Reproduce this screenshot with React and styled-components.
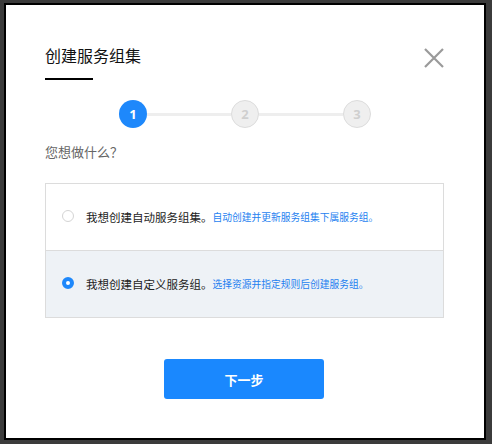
import React, { useState } from 'react'
import styled, { createGlobalStyle } from 'styled-components'

const GlobalStyle = createGlobalStyle`
    html, body {
        margin: 0;
        padding: 0;
        background: #3b3b3b;
    }
    body {
        font-family: "Noto Sans CJK SC", "Noto Sans", sans-serif;
    }
`

const steps = [1, 2, 3]

const options = [
    { id: 'auto', label: '我想创建自动服务组集。', hint: '自动创建并更新服务组集下属服务组。' },
    { id: 'custom', label: '我想创建自定义服务组。', hint: '选择资源并指定规则后创建服务组。' },
]

function App() {
    const [choice, setChoice] = useState('custom')

    return (
        <Page>
            <GlobalStyle />
            <Modal>
                <Header>
                    <TitleBlock>
                        <Title>创建服务组集</Title>
                        <TitleBar />
                    </TitleBlock>
                    <Close aria-label="close">
                        <svg width="20" height="20" viewBox="0 0 20 20">
                            <path d="M1 1 L19 19 M19 1 L1 19" stroke="#9a9a9a" strokeWidth="2.2" fill="none" />
                        </svg>
                    </Close>
                </Header>

                <Steps>
                    {steps.map((n, i) => (
                        <React.Fragment key={n}>
                            {i > 0 && <StepLine />}
                            <StepDot active={n === 1}>{n}</StepDot>
                        </React.Fragment>
                    ))}
                </Steps>

                <Question>您想做什么？</Question>

                <OptionList>
                    {options.map(o => (
                        <Option key={o.id} selected={choice === o.id} onClick={() => setChoice(o.id)}>
                            <Radio selected={choice === o.id} />
                            <Label>{o.label}</Label>
                            <Hint>{o.hint}</Hint>
                        </Option>
                    ))}
                </OptionList>

                <Footer>
                    <NextButton>下一步</NextButton>
                </Footer>
            </Modal>
        </Page>
    )
}

export default App

const Page = styled.div`
    width: 492px;
    height: 444px;
    box-sizing: border-box;
    padding: 3px 0 0 4px;
`

const Modal = styled.div`
    width: 482px;
    height: 437px;
    box-sizing: border-box;
    background: #fff;
    border: 2px solid #000;
    padding: 38px 40px 0 39px;
    display: flex;
    flex-direction: column;
`

const Header = styled.div`
    display: flex;
    justify-content: space-between;
    align-items: flex-start;
`

const TitleBlock = styled.div`
    display: flex;
    flex-direction: column;
`

const Title = styled.div`
    font-size: 16px;
    line-height: 24px;
    color: #111;
    font-weight: 400;
`

const TitleBar = styled.div`
    width: 48px;
    height: 2px;
    background: #000;
    margin-top: 11px;
`

const Close = styled.div`
    width: 20px;
    height: 20px;
    margin-top: 5px;
    cursor: pointer;

    svg {
        display: block;
    }
`

const Steps = styled.div`
    display: flex;
    align-items: center;
    justify-content: center;
    margin-top: 20px;
    margin-left: 1px;
`

const StepDot = styled.div`
    width: 28px;
    height: 28px;
    border-radius: 50%;
    box-sizing: border-box;
    display: flex;
    align-items: center;
    justify-content: center;
    font-family: "Open Sans", "Liberation Sans", sans-serif;
    font-weight: 700;
    font-size: 13px;
    background: ${p => p.active ? '#1e88fb' : '#efefef'};
    color: ${p => p.active ? '#fff' : '#cfcfcf'};
    border: ${p => p.active ? 'none' : '1px solid #dcdcdc'};
`

const StepLine = styled.div`
    width: 84px;
    height: 3px;
    background: #eeeeee;
`

const Question = styled.div`
    margin-top: 14px;
    font-size: 13px;
    line-height: 20px;
    color: #666;
`

const OptionList = styled.div`
    margin-top: 21px;
    border: 1px solid #dcdcdc;
    display: flex;
    flex-direction: column;
`

const Option = styled.div`
    height: 66px;
    display: flex;
    align-items: center;
    padding-left: 16px;
    background: ${p => p.selected ? '#eef2f6' : '#fff'};
    cursor: pointer;

    & + & {
        border-top: 1px solid #dcdcdc;
    }
`

const Radio = styled.span`
    width: 12px;
    height: 12px;
    border-radius: 50%;
    box-sizing: border-box;
    background: #fff;
    border: ${p => p.selected ? '4px solid #1e88fb' : '1px solid #d4d4d4'};
    margin-right: 12px;
    margin-top: -2px;
`

const Label = styled.span`
    font-size: 11.5px;
    color: #222;
`

const Hint = styled.span`
    font-size: 9.75px;
    color: #1e7ff0;
`

const Footer = styled.div`
    display: flex;
    justify-content: center;
    margin-top: 41px;
    margin-left: -1px;
`

const NextButton = styled.button`
    width: 160px;
    height: 40px;
    border: none;
    border-radius: 3px;
    background: #1a88fe;
    color: #fff;
    font-family: "Noto Sans CJK SC", "Noto Sans", sans-serif;
    font-size: 13px;
    font-weight: 700;
    cursor: pointer;
`
